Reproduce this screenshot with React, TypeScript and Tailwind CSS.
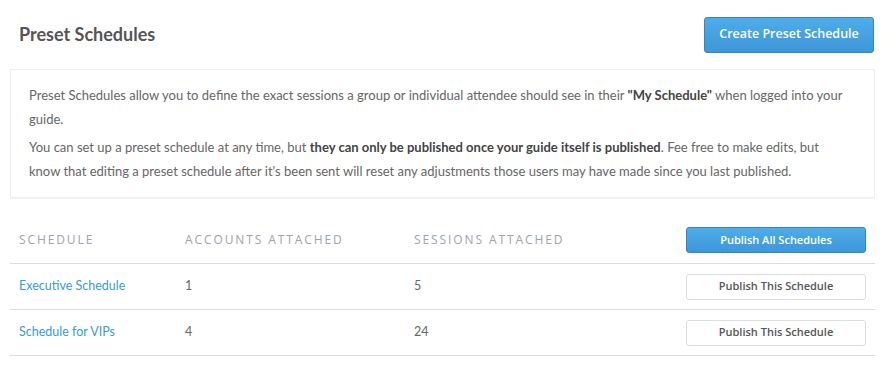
const rows = [
  { name: "Executive Schedule", accounts: 1, sessions: 5 },
  { name: "Schedule for VIPs", accounts: 4, sessions: 24 },
];

export default function App() {
  return (
    <div className="h-[389px] w-[892px] bg-white font-['Lato',sans-serif] text-[#666]">
      <div className="flex h-[69px] items-center justify-between pl-[19px] pr-[18px]">
        <h1 className="text-[18px] font-bold text-[#555]">Preset Schedules</h1>
        <button className="h-[36px] w-[170px] rounded-[3px] border border-[#3584c4] bg-gradient-to-b from-[#4eadea] to-[#3e96d8] font-['Open_Sans',sans-serif] text-[12.5px] font-semibold text-white">
          Create Preset Schedule
        </button>
      </div>

      <div className="mx-[10px] w-[865px] border border-[#eee] pb-[14px] pl-[18px] pr-[24px] pt-[13px] text-[13px] leading-[24px] shadow-[0_1px_1px_rgba(0,0,0,0.04)]">
        <p>
          Preset Schedules allow you to define the exact sessions a group or individual attendee should see in
          their <b className="text-[#444]">"My Schedule"</b> when logged into your guide.
        </p>
        <p className="mt-[4px]">
          You can set up a preset schedule at any time, but{" "}
          <b className="text-[#444]">they can only be published once your guide itself is published</b>. Fee free to
          make edits, but know that editing a preset schedule after it's been sent will reset any adjustments those
          users may have made since you last published.
        </p>
      </div>

      <div className="mx-[10px] mt-[29px] w-[865px]">
        <div className="flex h-[37px] items-start border-b border-[#ddd] font-['Open_Sans',sans-serif] text-[12px] uppercase tracking-[1.9px] text-[#9ca4ad]">
          <div className="w-[175px] pl-[9px] pt-[4px]">Schedule</div>
          <div className="w-[229px] pt-[4px]">Accounts Attached</div>
          <div className="flex-1 pt-[4px]">Sessions Attached</div>
          <button className="mr-[9px] h-[26px] w-[180px] rounded-[3px] border border-[#3584c4] bg-gradient-to-b from-[#4eadea] to-[#3e96d8] text-[11px] font-semibold normal-case tracking-normal text-white">
            Publish All Schedules
          </button>
        </div>
        {rows.map((r) => (
          <div key={r.name} className="flex h-[46px] items-center border-b border-[#ddd] text-[12.5px]">
            <a className="w-[175px] pl-[9px] text-[#3a9ad9]">{r.name}</a>
            <div className="w-[229px]">{r.accounts}</div>
            <div className="flex-1">{r.sessions}</div>
            <button className="mr-[9px] h-[26px] w-[180px] rounded-[3px] border border-[#ddd] bg-white font-['Open_Sans',sans-serif] text-[11px] font-semibold text-[#555]">
              Publish This Schedule
            </button>
          </div>
        ))}
      </div>
    </div>
  );
}
